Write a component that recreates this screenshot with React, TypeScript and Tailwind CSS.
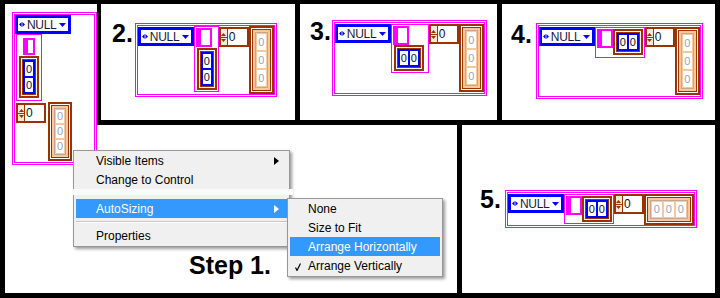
import React from 'react';

const Enum = () => (
  <div className="flex h-[19px] w-[56px] shrink-0 items-center border-[3px] border-[#0000ff] bg-white">
    <svg width="6" height="5" viewBox="0 0 6 5" className="ml-px shrink-0">
      <path d="M0 2.5 2.6 0v5zM6 2.5 3.4 0v5z" fill="#0000ff" />
    </svg>
    <span className="ml-[2px] text-[12px] leading-none tracking-[-0.3px] text-[#1a1a3a]">NULL</span>
    <svg width="7" height="4" viewBox="0 0 7 4" className="mr-[2px] ml-auto shrink-0">
      <path d="M0 0h7L3.5 4z" fill="#0000ff" />
    </svg>
  </div>
);

const Bool = ({ small = false }: { small?: boolean }) => (
  <div
    className={`shrink-0 border-2 border-l-[5px] border-[#ff00ff] bg-white ${
      small ? 'h-[17px] w-[12px]' : 'h-[19px] w-[16px]'
    }`}
  />
);

const NumCell = () => (
  <div className="flex h-[14px] w-[8px] items-center justify-center bg-white text-[11px] leading-none text-[#111]">
    0
  </div>
);

const NumArray = ({ row = false }: { row?: boolean }) => (
  <div className="shrink-0 border-2 border-[#993300] bg-white p-px">
    <div className="border border-[#993300]">
      <div className={`flex ${row ? 'flex-row' : 'flex-col'} gap-[2px] bg-[#0000ff] p-[2px]`}>
        <NumCell />
        <NumCell />
      </div>
    </div>
  </div>
);

const Numeric = () => (
  <div className="flex h-[20px] w-[30px] shrink-0 border-2 border-[#993300] bg-white">
    <div className="flex w-[7px] flex-col items-center justify-center gap-px border-r border-[#993300] bg-[#f5e8de]">
      <svg width="5" height="3" viewBox="0 0 5 3">
        <path d="M2.5 0 5 3H0z" fill="#993300" />
      </svg>
      <div className="h-px w-full bg-[#993300]" />
      <svg width="5" height="3" viewBox="0 0 5 3">
        <path d="M0 0h5L2.5 3z" fill="#993300" />
      </svg>
    </div>
    <span className="pl-px text-[12px] leading-[16px] text-[#111]">0</span>
  </div>
);

type PeachSize = 'sm' | 'md' | 'row';

const PeachArray = ({ size = 'md' }: { size?: PeachSize }) => {
  const cell =
    size === 'row' ? 'h-[15px] w-[10px]' : size === 'sm' ? 'h-[13px] w-[8px]' : 'h-[16px] w-[9px]';
  return (
    <div className="shrink-0 border-2 border-[#993300] bg-white p-px">
      <div className="border border-[#993300] bg-[#f8c89c] p-[2px]">
        <div
          className={`flex ${size === 'row' ? 'flex-row' : 'flex-col'} gap-[2px] border border-[#c9a58a] p-px`}
        >
          {[0, 1, 2].map((i) => (
            <div
              key={i}
              className={`flex ${cell} items-center justify-center bg-white text-[11px] leading-none text-[#9aa3b5]`}
            >
              0
            </div>
          ))}
        </div>
      </div>
    </div>
  );
};

const Cluster = ({ children, className = '' }: { children: React.ReactNode; className?: string }) => (
  <div className="shrink-0 border border-[#ff00ff] bg-white p-px">
    <div className={`border border-[#ff00ff] ${className}`}>{children}</div>
  </div>
);

const Step = ({ n, className = '' }: { n: string; className?: string }) => (
  <span className={`shrink-0 text-[25px] leading-none font-bold text-black ${className}`}>{n}.</span>
);

function MenuItem({
  label,
  active = false,
  arrow = false,
  check = false,
  indent = 'pl-[20px]',
}: {
  label: string;
  active?: boolean;
  arrow?: boolean;
  check?: boolean;
  indent?: string;
}) {
  return (
    <div
      className={`relative mx-[2px] flex h-[19px] items-center pr-[8px] ${indent} text-[12px] whitespace-nowrap ${
        active ? 'bg-[#3399ff] text-white' : 'text-black'
      }`}
    >
      {check && (
        <svg width="6" height="8" viewBox="0 0 6 8" className="absolute top-[7px] left-[5px]">
          <path d="M0.5 4.5 2 7.5 5.5 0.5" fill="none" stroke="#000" strokeWidth="1.2" />
        </svg>
      )}
      <span>{label}</span>
      {arrow && (
        <svg width="5" height="8" viewBox="0 0 5 8" className="ml-auto">
          <path d="M0 0 5 4 0 8z" fill={active ? '#fff' : '#000'} />
        </svg>
      )}
    </div>
  );
}

export default function App() {
  return (
    <div className="relative h-[298px] w-[720px] overflow-hidden bg-black px-[5px] pt-[4px] pb-[5px] font-['Liberation_Sans',Arial,sans-serif]">
      <div className="grid h-full grid-cols-[92px_4px_194px_5px_157px_5px_35px_5px_213px] grid-rows-[116px_5px_168px]">
        {/* step 1 column */}
        <section className="col-start-1 row-span-3 row-start-1 bg-white pt-[8px] pl-[7px]">
          <Cluster className="flex flex-col items-start">
            <Enum />
            <div className="ml-px flex flex-col items-center gap-px border border-[#ff00ff] px-[2px] pt-[3px] pb-[2px]">
              <Bool small />
              <NumArray />
            </div>
            <div className="flex items-start gap-[2px] pt-px pb-px">
              <div className="mt-px ml-px">
                <Numeric />
              </div>
              <PeachArray size="sm" />
            </div>
          </Cluster>
        </section>

        {/* 2 */}
        <section className="col-start-3 row-start-1 flex items-start bg-white pt-[19px] pl-[11px]">
          <Step n="2" className="mt-[-2px] mr-[2px]" />
          <Cluster className="flex items-start pt-px">
            <Enum />
            <div className="-mt-px flex flex-col items-start gap-px border border-[#ff00ff] p-px">
              <Bool />
              <div className="ml-px">
                <NumArray />
              </div>
            </div>
            <Numeric />
            <div className="-mt-px">
              <PeachArray />
            </div>
          </Cluster>
        </section>

        {/* 3 */}
        <section className="col-span-3 col-start-5 row-start-1 flex items-start bg-white pt-[16px] pl-[10px]">
          <Step n="3" className="mt-[-1px] mr-px" />
          <Cluster className="flex items-start pt-px pb-px">
            <Enum />
            <div className="flex flex-col items-start border border-[#ff00ff] p-px pr-[4px]">
              <Bool />
              <div className="ml-px">
                <NumArray row />
              </div>
            </div>
            <Numeric />
            <PeachArray />
          </Cluster>
        </section>

        {/* 4 */}
        <section className="col-start-9 row-start-1 flex items-start bg-white pt-[19px] pl-[9px]">
          <Step n="4" className="mt-[-1px] mr-[4px]" />
          <Cluster className="flex items-start pt-px pb-px">
            <Enum />
            <div className="flex items-start border border-[#ff00ff] p-px pb-[2px]">
              <Bool />
              <NumArray row />
            </div>
            <Numeric />
            <PeachArray />
          </Cluster>
        </section>

        {/* step 1 lower area */}
        <section className="col-span-4 col-start-2 row-start-3 bg-white pt-[128px] pl-[92px]">
          <Step n="Step 1" />
        </section>

        {/* 5 */}
        <section className="col-span-3 col-start-7 row-start-3 flex items-center justify-center bg-white">
          <div className="flex items-start">
            <Step n="5" className="mt-[-3px] mr-[4px]" />
            <Cluster className="flex items-start pt-px">
              <Enum />
              <div className="flex items-start border border-[#ff00ff] p-px">
                <Bool />
                <NumArray row />
              </div>
              <Numeric />
              <PeachArray size="row" />
            </Cluster>
          </div>
        </section>
      </div>

      {/* context menu */}
      <div className="absolute top-[150px] left-[73px] w-[217px] border border-[#979797] bg-[#f0f0f0] shadow-[2px_2px_3px_rgba(0,0,0,0.4)]">
        <MenuItem label="Visible Items" arrow />
        <MenuItem label="Change to Control" />
        <div className="h-[10px]">
          <div className="-mr-[4px] -ml-px h-[6px] bg-[#fbfbfb]" />
        </div>
        <MenuItem label="AutoSizing" active arrow />
        <div className="mx-[2px] my-[3px] border-t border-b border-t-[#c8c8c8] border-b-white" />
        <MenuItem label="Properties" />
        <div className="h-px" />
      </div>

      {/* submenu */}
      <div className="absolute top-[198px] left-[287px] w-[156px] border border-[#979797] bg-[#f0f0f0] shadow-[2px_2px_3px_rgba(0,0,0,0.4)]">
        <MenuItem label="None" indent="pl-[18px]" />
        <MenuItem label="Size to Fit" indent="pl-[18px]" />
        <MenuItem label="Arrange Horizontally" indent="pl-[18px]" active />
        <MenuItem label="Arrange Vertically" indent="pl-[18px]" check />
        <div className="h-px" />
      </div>
    </div>
  );
}
